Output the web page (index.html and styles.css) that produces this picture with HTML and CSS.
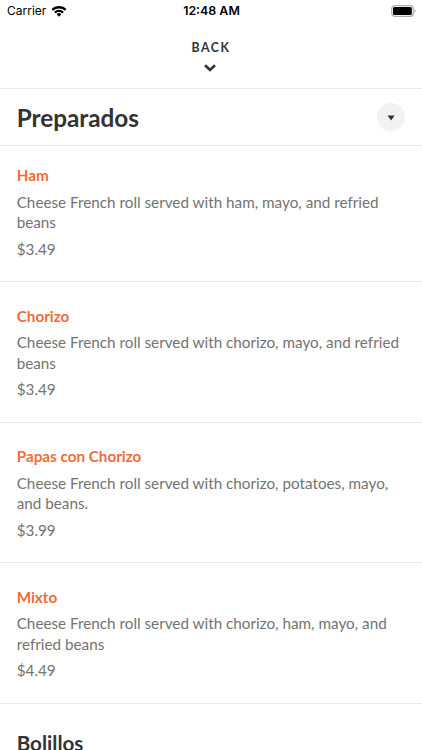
FILE: index.html
```
<!DOCTYPE html>
<html lang="en">
<head>
    <meta charset="UTF-8">
    <meta name="viewport" content="width=device-width, initial-scale=1.0">
    <title>Preparados</title>
    <link rel="stylesheet" href="styles.css">
</head>
<body>
    <div class="status-bar">
        <div class="carrier">
            <span>Carrier</span>
            <svg class="wifi" width="16" height="12" viewBox="0 0 16 12">
                <path d="M.5 4.1a10.6 10.6 0 0 1 15 0l-1.6 1.7a8.4 8.4 0 0 0-11.8 0z"/>
                <path d="M3.1 6.8a7 7 0 0 1 9.8 0l-1.6 1.6a4.7 4.7 0 0 0-6.6 0z"/>
                <path d="M5.6 9.3a3.4 3.4 0 0 1 4.8 0L8 11.8z"/>
            </svg>
        </div>
        <div class="time">12:48 AM</div>
        <div class="battery">
            <svg width="25" height="12" viewBox="0 0 25 12">
                <rect x=".7" y=".7" width="21.6" height="10.6" rx="3" fill="none" stroke="#aaa" stroke-width="1.2"/>
                <rect x="2" y="2" width="18.8" height="8" rx="1.5"/>
                <path d="M23.6 4.2v3.6c1.4-.6 1.4-3 0-3.6z" fill="#999"/>
            </svg>
        </div>
    </div>

    <button class="back-button">
        <span>BACK</span>
        <svg width="12" height="8" viewBox="0 0 12 8">
            <path d="M1 1.2L6 6l5-4.8"/>
        </svg>
    </button>

    <div class="section-header">
        <h2>Preparados</h2>
        <button class="toggle">
            <svg width="8" height="6" viewBox="0 0 8 6"><path d="M.6 .6h7L4.1 5.6z"/></svg>
        </button>
    </div>

    <div class="menu">
        <div class="item">
            <h3>Ham</h3>
            <p>Cheese French roll served with ham, mayo, and refried beans</p>
            <p class="price">$3.49</p>
        </div>
        <div class="item">
            <h3>Chorizo</h3>
            <p>Cheese French roll served with chorizo, mayo, and refried beans</p>
            <p class="price">$3.49</p>
        </div>
        <div class="item">
            <h3>Papas con Chorizo</h3>
            <p>Cheese French roll served with chorizo, potatoes, mayo, and beans.</p>
            <p class="price">$3.99</p>
        </div>
        <div class="item">
            <h3>Mixto</h3>
            <p>Cheese French roll served with chorizo, ham, mayo, and refried beans</p>
            <p class="price">$4.49</p>
        </div>
    </div>

    <h2 class="next-section">Bolillos</h2>
</body>
</html>
```

FILE: styles.css
```
* {
    box-sizing: border-box;
}
body {
    margin: 0;
    height: 750px;
    overflow: hidden;
    font-family: Lato, sans-serif;
    background: #fff;
    color: #333;
}
h2, h3, p {
    margin: 0;
}
button {
    border: none;
    padding: 0;
    font-family: inherit;
    color: inherit;
    cursor: pointer;
}
.status-bar {
    display: grid;
    grid-template-columns: 1fr auto 1fr;
    align-items: center;
    height: 21px;
    padding: 0 6px 0 7px;
    font-family: Inter, sans-serif;
    font-size: 12px;
    color: #000;
}
.carrier {
    display: flex;
    align-items: center;
    gap: 5px;
}
.time {
    font-size: 12.4px;
    font-weight: 600;
}
.battery {
    display: flex;
    justify-content: flex-end;
}
.back-button {
    display: flex;
    flex-direction: column;
    align-items: center;
    width: 100%;
    height: 67px;
    padding-top: 19px;
    background: #fff;
    font-size: 12.3px;
    font-weight: 700;
    line-height: 15px;
    letter-spacing: 1.6px;
}
.back-button svg {
    margin-top: 8.5px;
    margin-right: 2px;
    fill: none;
    stroke: #333;
    stroke-width: 2.6;
}
.section-header {
    display: flex;
    align-items: center;
    justify-content: space-between;
    height: 58px;
    padding: 0 17px 0 16.7px;
    border-top: 1px solid #ececec;
    border-bottom: 1px solid #ececec;
}
.section-header h2 {
    padding-top: 2px;
    font-size: 24.3px;
    line-height: 30px;
}
.toggle {
    display: flex;
    align-items: center;
    justify-content: center;
    width: 28px;
    height: 28px;
    border-radius: 50%;
    background: #f2f2f2;
}
.toggle svg {
    margin-top: 1px;
    fill: #333;
}
.item {
    height: 140.5px;
    padding: 23.5px 16.7px 0;
    border-bottom: 1px solid #ececec;
    font-size: 15.26px;
    line-height: 20.5px;
    color: #737373;
}
.item:first-child {
    height: 136px;
    padding-top: 19px;
}
.item h3 {
    margin-bottom: 6px;
    font-size: 15.26px;
    color: #f26b3a;
}
.item .price {
    margin-top: 6px;
}
.next-section {
    padding: 26px 16.7px 0;
    font-size: 20.6px;
    line-height: 26px;
}
```
